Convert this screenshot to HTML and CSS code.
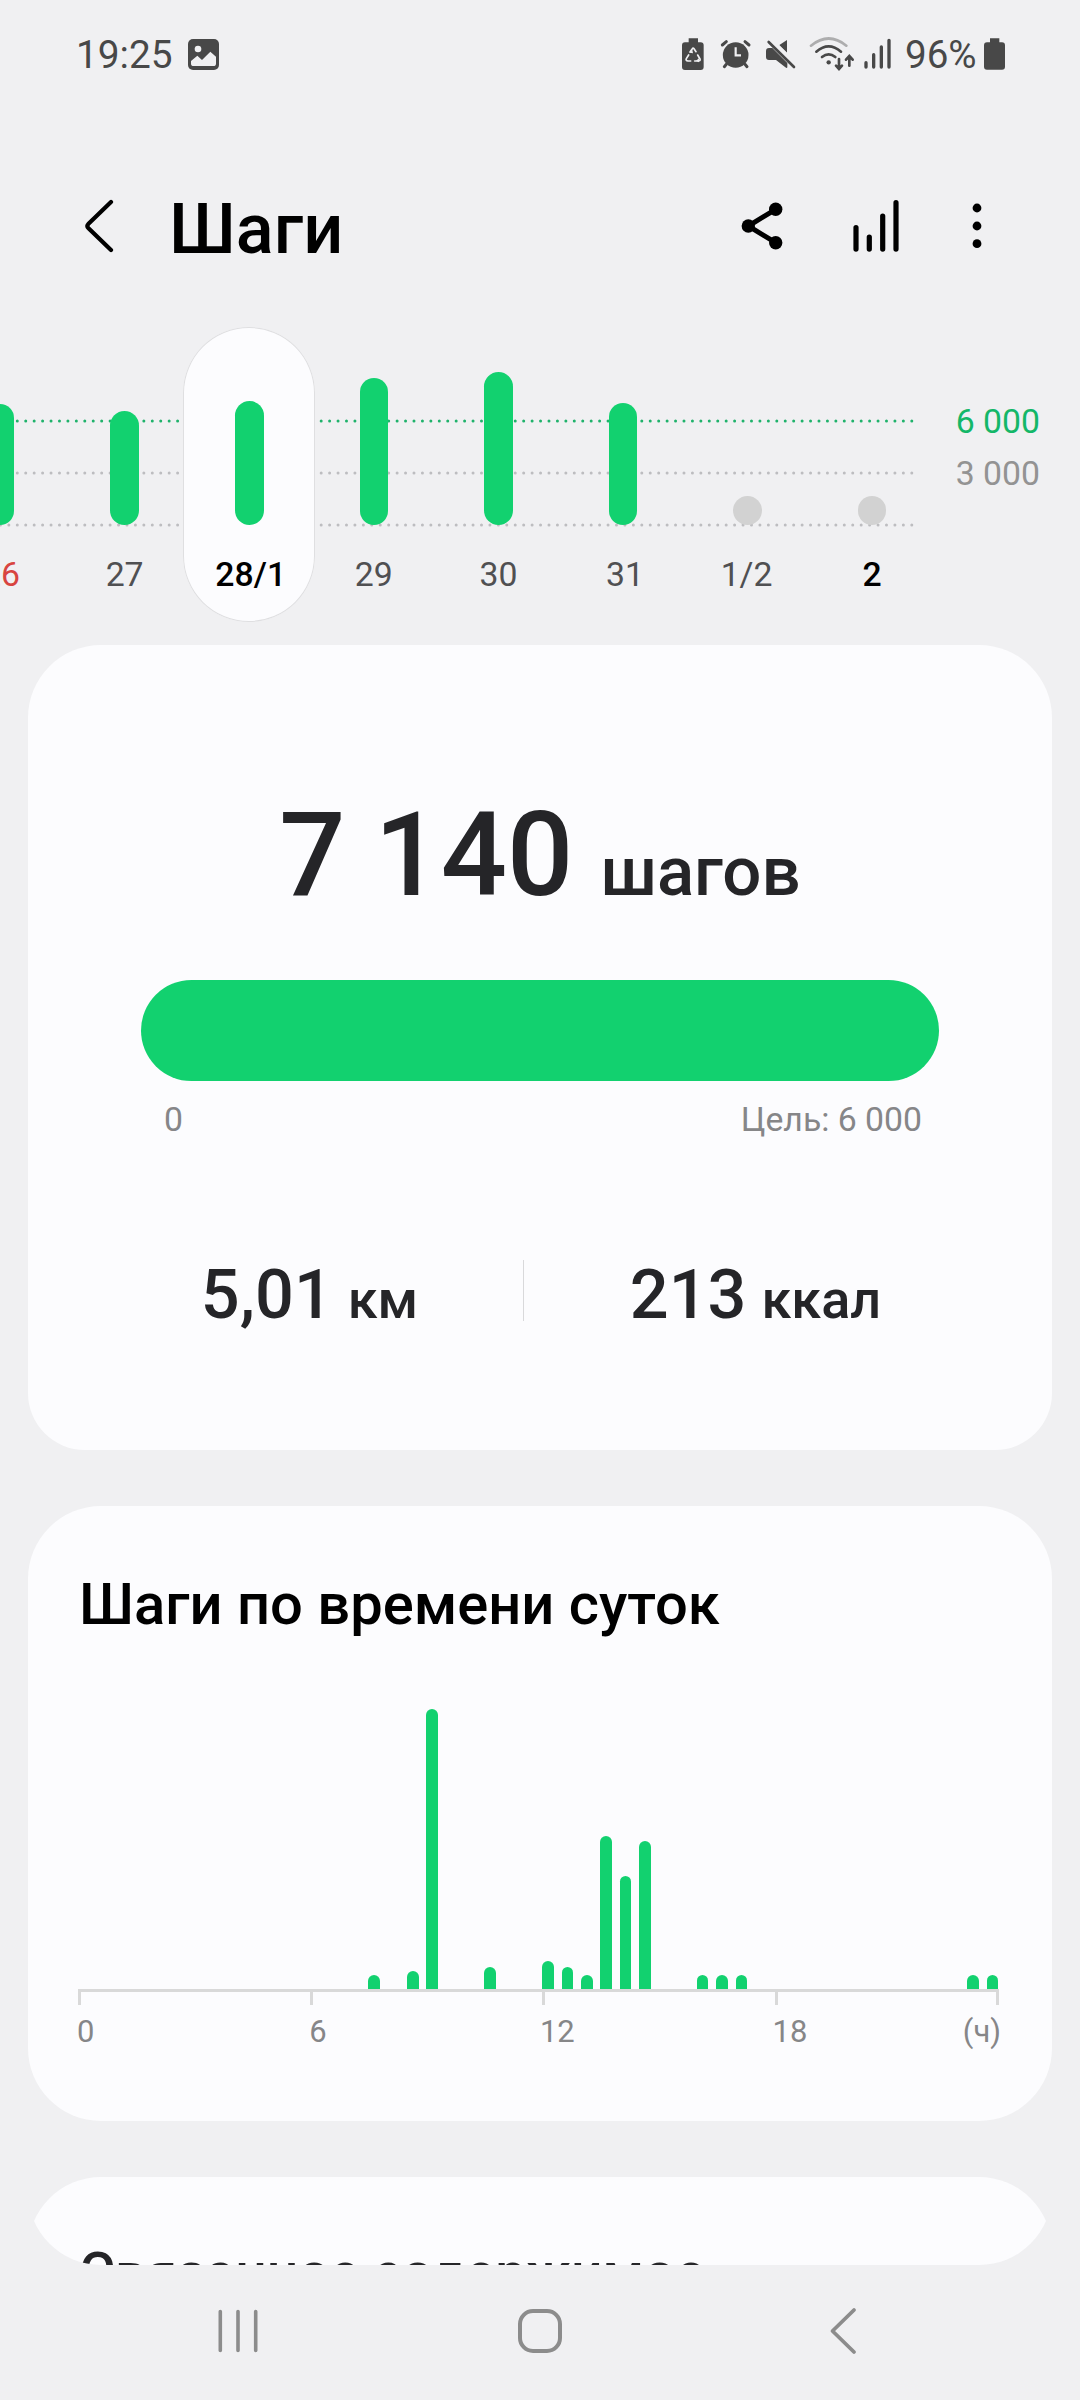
FILE: index.html
```html
<!DOCTYPE html>
<html lang="ru">
<head>
<meta charset="utf-8">
<title>Шаги</title>
<link rel="stylesheet" href="styles.css">
</head>
<body>
<div class="status">
  <span class="clock">19:25</span>
  <svg class="pic" width="31" height="31" viewBox="0 0 93 93"><rect width="93" height="93" rx="15" fill="#484848"/><circle cx="30" cy="30" r="10" fill="#f0f0f2"/><path d="M9 66L28 50L42 63L67 38L84 53V74Q84 81 76 81H17Q9 81 9 74Z" fill="#f0f0f2"/></svg>
  <svg class="tray" width="220" height="36" viewBox="60 48 660 108" fill="#484848">
    <path d="M86 55h28v12h8q9 0 9 9v65q0 9-9 9H75q-9 0-9-9V76q0-9 9-9h11z"/>
    <g fill="none" stroke="#f0f0f2" stroke-width="5" stroke-linejoin="round" stroke-linecap="round"><path d="M90 96l7-10q2-3 5 0l6 9M113 105l7 12q2 6-5 6h-11M92 123h-8q-8-1-5-7l7-11"/></g>
    <path d="M99 100l-10-2 8-8z M108 122l9-7v12z" fill="#f0f0f2"/>
    <circle cx="227" cy="105" r="38.500"/>
    <g stroke="#484848" stroke-width="9" stroke-linecap="round"><path d="M187 75l12-10M267 75l-12-10M199 133l-6 7M255 133l6 7"/></g>
    <path d="M227 82v24h16" fill="none" stroke="#f0f0f2" stroke-width="6.500"/>
    <path d="M381 60V99L357 76ZM327 84H337L382 129V140Q382 147 376 142L348 120H327Q318 120 318 111V93Q318 84 327 84Z"/>
    <path d="M334 58l76 75" stroke="#f0f0f2" stroke-width="9"/>
    <path d="M326 66l76 75" stroke="#484848" stroke-width="8" stroke-linecap="round"/>
    <g fill="none" stroke="#484848" stroke-width="8" stroke-linecap="round"><path d="M453 77q53-43 106 0" stroke="#adadae"/><path d="M469 95q37-32 74 0M486 111q20-16 40 0M537 117v28M528 137l9 10 9-10M568 137v-28M558 119l10-11 10 11"/></g>
    <circle cx="506" cy="127" r="6.500"/>
    <path d="M618 128v13M641 104v37M664 81v60M687 61v80" stroke="#484848" stroke-width="10" stroke-linecap="round"/>
  </svg>
  <span class="percent">96%</span>
  <svg class="battery" width="21" height="32" viewBox="0 0 63 96"><path d="M18 1h28v12h8q9 0 9 9v64q0 9-9 9H9q-9 0-9-9V22q0-9 9-9h9z" fill="#484848"/></svg>
</div>

<header class="appbar">
  <svg class="back" width="32" height="56" viewBox="84 198 32 56"><path d="M111 202L88.500 223.700Q86.200 226 88.500 228.300L111 250" fill="none" stroke="#000" stroke-width="4.200" stroke-linecap="round"/></svg>
  <h1>Шаги</h1>
  <svg class="share" width="44" height="50" viewBox="740 201 44 50"><path d="M775.700 209.300L748.300 226l27.400 16.700" fill="none" stroke="#000" stroke-width="5"/><circle cx="748.300" cy="226" r="6.700"/><circle cx="775.700" cy="209.300" r="6.700"/><circle cx="775.700" cy="242.700" r="6.700"/></svg>
  <svg class="trend" width="50" height="56" viewBox="851 198 50 56"><path d="M856 227.500v21.600M869.300 237v12.100M882.700 216v33.100M896 202.700v46.400" stroke="#000" stroke-width="5.200" stroke-linecap="round"/></svg>
  <svg class="more" width="10" height="46" viewBox="0 0 10 46"><circle cx="5" cy="5" r="4.400"/><circle cx="5" cy="23" r="4.400"/><circle cx="5" cy="40.700" r="4.400"/></svg>
</header>

<section class="days">
  <svg class="guides" width="930" height="200" viewBox="0 327 930 200" fill="none" stroke-width="3" stroke-dasharray="0 8.4375" stroke-linecap="round">
    <path d="M911.800 421H318M177.600 421H0" stroke="#1fb26b"/>
    <path d="M911.800 473H318M177.600 473H0M911.800 525H318M177.600 525H0" stroke="#bdbdc0"/>
  </svg>
  <div class="strip">
    <div class="day sunday"><div class="plot"><i style="height:121.500px"></i></div><span>26</span></div>
    <div class="day"><div class="plot"><i style="height:114.500px"></i></div><span>27</span></div>
    <div class="day selected"><div class="plot"><i style="height:124px"></i></div><span>28/1</span></div>
    <div class="day"><div class="plot"><i style="height:147.500px"></i></div><span>29</span></div>
    <div class="day"><div class="plot"><i style="height:153.500px"></i></div><span>30</span></div>
    <div class="day month-end"><div class="plot"><i style="height:122.500px"></i></div><span>31</span></div>
    <div class="day month-start"><div class="plot"><i class="empty"></i></div><span>1/2</span></div>
    <div class="day today"><div class="plot"><i class="empty"></i></div><span>2</span></div>
  </div>
  <div class="scale"><span class="goal">6 000</span><span>3 000</span></div>
</section>

<main class="feed">
  <section class="card summary">
    <div class="count"><b>7 140</b><span>шагов</span></div>
    <div class="progress"></div>
    <div class="range"><span>0</span><span>Цель: 6 000</span></div>
    <div class="stats">
      <div class="stat"><b>5,01</b><span>км</span></div>
      <div class="rule"></div>
      <div class="stat"><b>213</b><span>ккал</span></div>
    </div>
  </section>

  <section class="card hours">
    <h2>Шаги по времени суток</h2>
    <div class="bars">
      <i></i><i></i><i></i><i></i><i></i><i></i><i></i><i></i><i></i><i></i><i></i><i></i><i></i><i></i><i></i>
      <i style="height:14px"></i><i></i><i style="height:18.300px"></i><i style="height:279.700px"></i><i></i><i></i><i style="height:21.700px"></i><i></i><i></i>
      <i style="height:27.700px"></i><i style="height:22px"></i><i style="height:14px"></i><i style="height:153.500px"></i><i style="height:113px"></i><i style="height:148px"></i><i></i><i></i>
      <i style="height:14px"></i><i style="height:14px"></i><i style="height:14px"></i><i></i><i></i><i></i><i></i><i></i><i></i><i></i><i></i><i></i><i></i><i></i>
      <i style="height:14px"></i><i style="height:14px"></i>
    </div>
    <div class="ticks"><i></i><i></i><i></i><i></i></div>
    <div class="labels"><span>0</span><span>6</span><span>12</span><span>18</span><span class="unit">(ч)</span></div>
  </section>

  <section class="card related"><h2>Связанное содержимое</h2></section>
</main>

<nav class="navbar">
  <svg width="42" height="48" viewBox="217 2307 42 48"><path d="M220.300 2311.500v39M238 2311.500v39M255.700 2311.500v39" stroke="#8c8c8c" stroke-width="3.600" stroke-linecap="round"/></svg>
  <svg class="home" width="48" height="48" viewBox="516 2307 48 48"><rect x="520" y="2311" width="40" height="40" rx="13" fill="none" stroke="#8c8c8c" stroke-width="4"/></svg>
  <svg width="32" height="48" viewBox="826 2307 32 48"><path d="M854 2310L832.500 2331 854 2352" fill="none" stroke="#8c8c8c" stroke-width="3.800" stroke-linecap="round" stroke-linejoin="round"/></svg>
</nav>
</body>
</html>
```

FILE: styles.css
```css
* { box-sizing: border-box; }
body {
  margin: 0;
  width: 1080px;
  height: 2400px;
  overflow: hidden;
  display: flex;
  flex-direction: column;
  background: #f0f0f2;
  color: #000;
  font-family: Roboto, "Liberation Sans", sans-serif;
}
svg { display: block; flex: none; }
h1, h2 { margin: 0; font-weight: 500; white-space: nowrap; }
b { font-weight: 500; }

.status {
  display: flex;
  align-items: center;
  height: 108px;
  padding: 0 75px;
  font-size: 38.6px;
  color: #484848;
}
.clock { width: 113px; padding-left: 1px; font-size: 38.8px; white-space: nowrap; }
.pic { margin-top: 1px; }
.tray { margin: 0 5px 0 461px; }
.percent { width: 79px; white-space: nowrap; }

.appbar {
  display: flex;
  align-items: center;
  height: 219px;
  padding: 17px 0 0 84px;
}
.appbar h1 {
  width: 571px;
  margin-left: 53px;
  padding-top: 5px;
  font-size: 70.3px;
}
.trend { margin-left: 67px; }
.more { margin-left: 71px; }

.days {
  position: relative;
  height: 318px;
}
.guides {
  position: absolute;
  left: 0;
  top: 0;
}
.strip {
  position: relative;
  display: flex;
  margin-left: -62.3px;
}
.day {
  flex: none;
  width: 124.6px;
  height: 295px;
  text-align: center;
  font-size: 33.75px;
  color: #505052;
}
.plot {
  display: flex;
  align-items: flex-end;
  justify-content: center;
  height: 198px;
}
.plot i {
  width: 28.6px;
  border-radius: 15px;
  background: #12d16f;
}
.plot .empty { height: 28.6px; background: #d2d2d2; }
.day span { display: block; line-height: 100px; }
.sunday { color: #d84440; }
.sunday span { padding-left: 2px; }
.selected {
  width: 132px;
  margin: 0 -3.7px;
  border-radius: 66px;
  background: #fcfcfe;
  box-shadow: inset 0 0 0 1px #dfdfe1;
}
.selected span { padding-left: 3px; }
.month-end span { padding-left: 4px; }
.month-start span { padding-right: 2px; }
.selected, .today { color: #000; font-weight: 500; }
.scale {
  position: absolute;
  right: 40px;
  top: 68.5px;
  display: flex;
  flex-direction: column;
  text-align: right;
  font-size: 33.75px;
  line-height: 52px;
  color: #939393;
}
.goal { color: #14b768; }

.feed {
  display: flex;
  flex-direction: column;
  gap: 56px;
  height: 1620px;
  margin: 0 28px;
  overflow: hidden;
  border-radius: 0 0 73px 73px;
}
.card {
  flex: none;
  border-radius: 73px;
  background: #fcfcfe;
}
.summary {
  height: 805px;
  padding-top: 140px;
  border-radius: 73px 73px 57px 57px;
  color: #252528;
}
.count {
  display: flex;
  align-items: baseline;
  justify-content: center;
  gap: 27px;
  height: 140px;
  line-height: 140px;
  font-size: 116.6px;
}
.count span { font-size: 69px; font-weight: 500; }
.progress {
  height: 101px;
  margin: 55px 113px 0;
  border-radius: 51px;
  background: #12d16f;
}
.range {
  display: flex;
  justify-content: space-between;
  margin-top: 19px;
  padding: 0 130px 0 136px;
  font-size: 33.75px;
  line-height: 40px;
  color: #868688;
}
.stats {
  display: grid;
  grid-template-columns: 427px 1px 463px;
  height: 70px;
  margin: 120px 0 0 68px;
}
.stat {
  display: flex;
  align-items: baseline;
  justify-content: center;
  gap: 15px;
  line-height: 70px;
  font-size: 68.4px;
}
.stat span { font-size: 54px; font-weight: 500; }
.rule { height: 61px; background: #d9d9db; }

.hours {
  height: 615px;
  padding: 64px 53px 0 50px;
}
.card h2 { padding-left: 1px; font-size: 57.9px; line-height: 68px; }
.bars {
  display: flex;
  align-items: flex-end;
  justify-content: space-between;
  height: 354px;
  padding-left: 0.4px;
  border-bottom: 3px solid #d9d9d9;
}
.bars i {
  width: 11.6px;
  border-radius: 6px 6px 0 0;
  background: #12d16f;
}
.ticks {
  display: grid;
  grid-template-columns: repeat(3, 232.2px) 1fr;
  height: 13px;
}
.ticks i { border-left: 3px solid #d9d9d9; }
.ticks i:last-child { border-right: 3px solid #d9d9d9; }
.labels {
  display: grid;
  grid-template-columns: 232.2px 230.7px 232.7px 1fr auto;
  margin: 9px -2px 0 -1px;
  font-size: 30.94px;
  line-height: 36px;
  color: #868688;
}
.related {
  height: 400px;
  padding: 63px 50px 0;
  color: #252528;
}
.card.related h2 { font-size: 55.3px; }

.navbar {
  display: flex;
  justify-content: space-between;
  align-items: center;
  height: 132px;
  padding: 0 222px 0 217px;
}
.home { margin-right: 6px; }
```
